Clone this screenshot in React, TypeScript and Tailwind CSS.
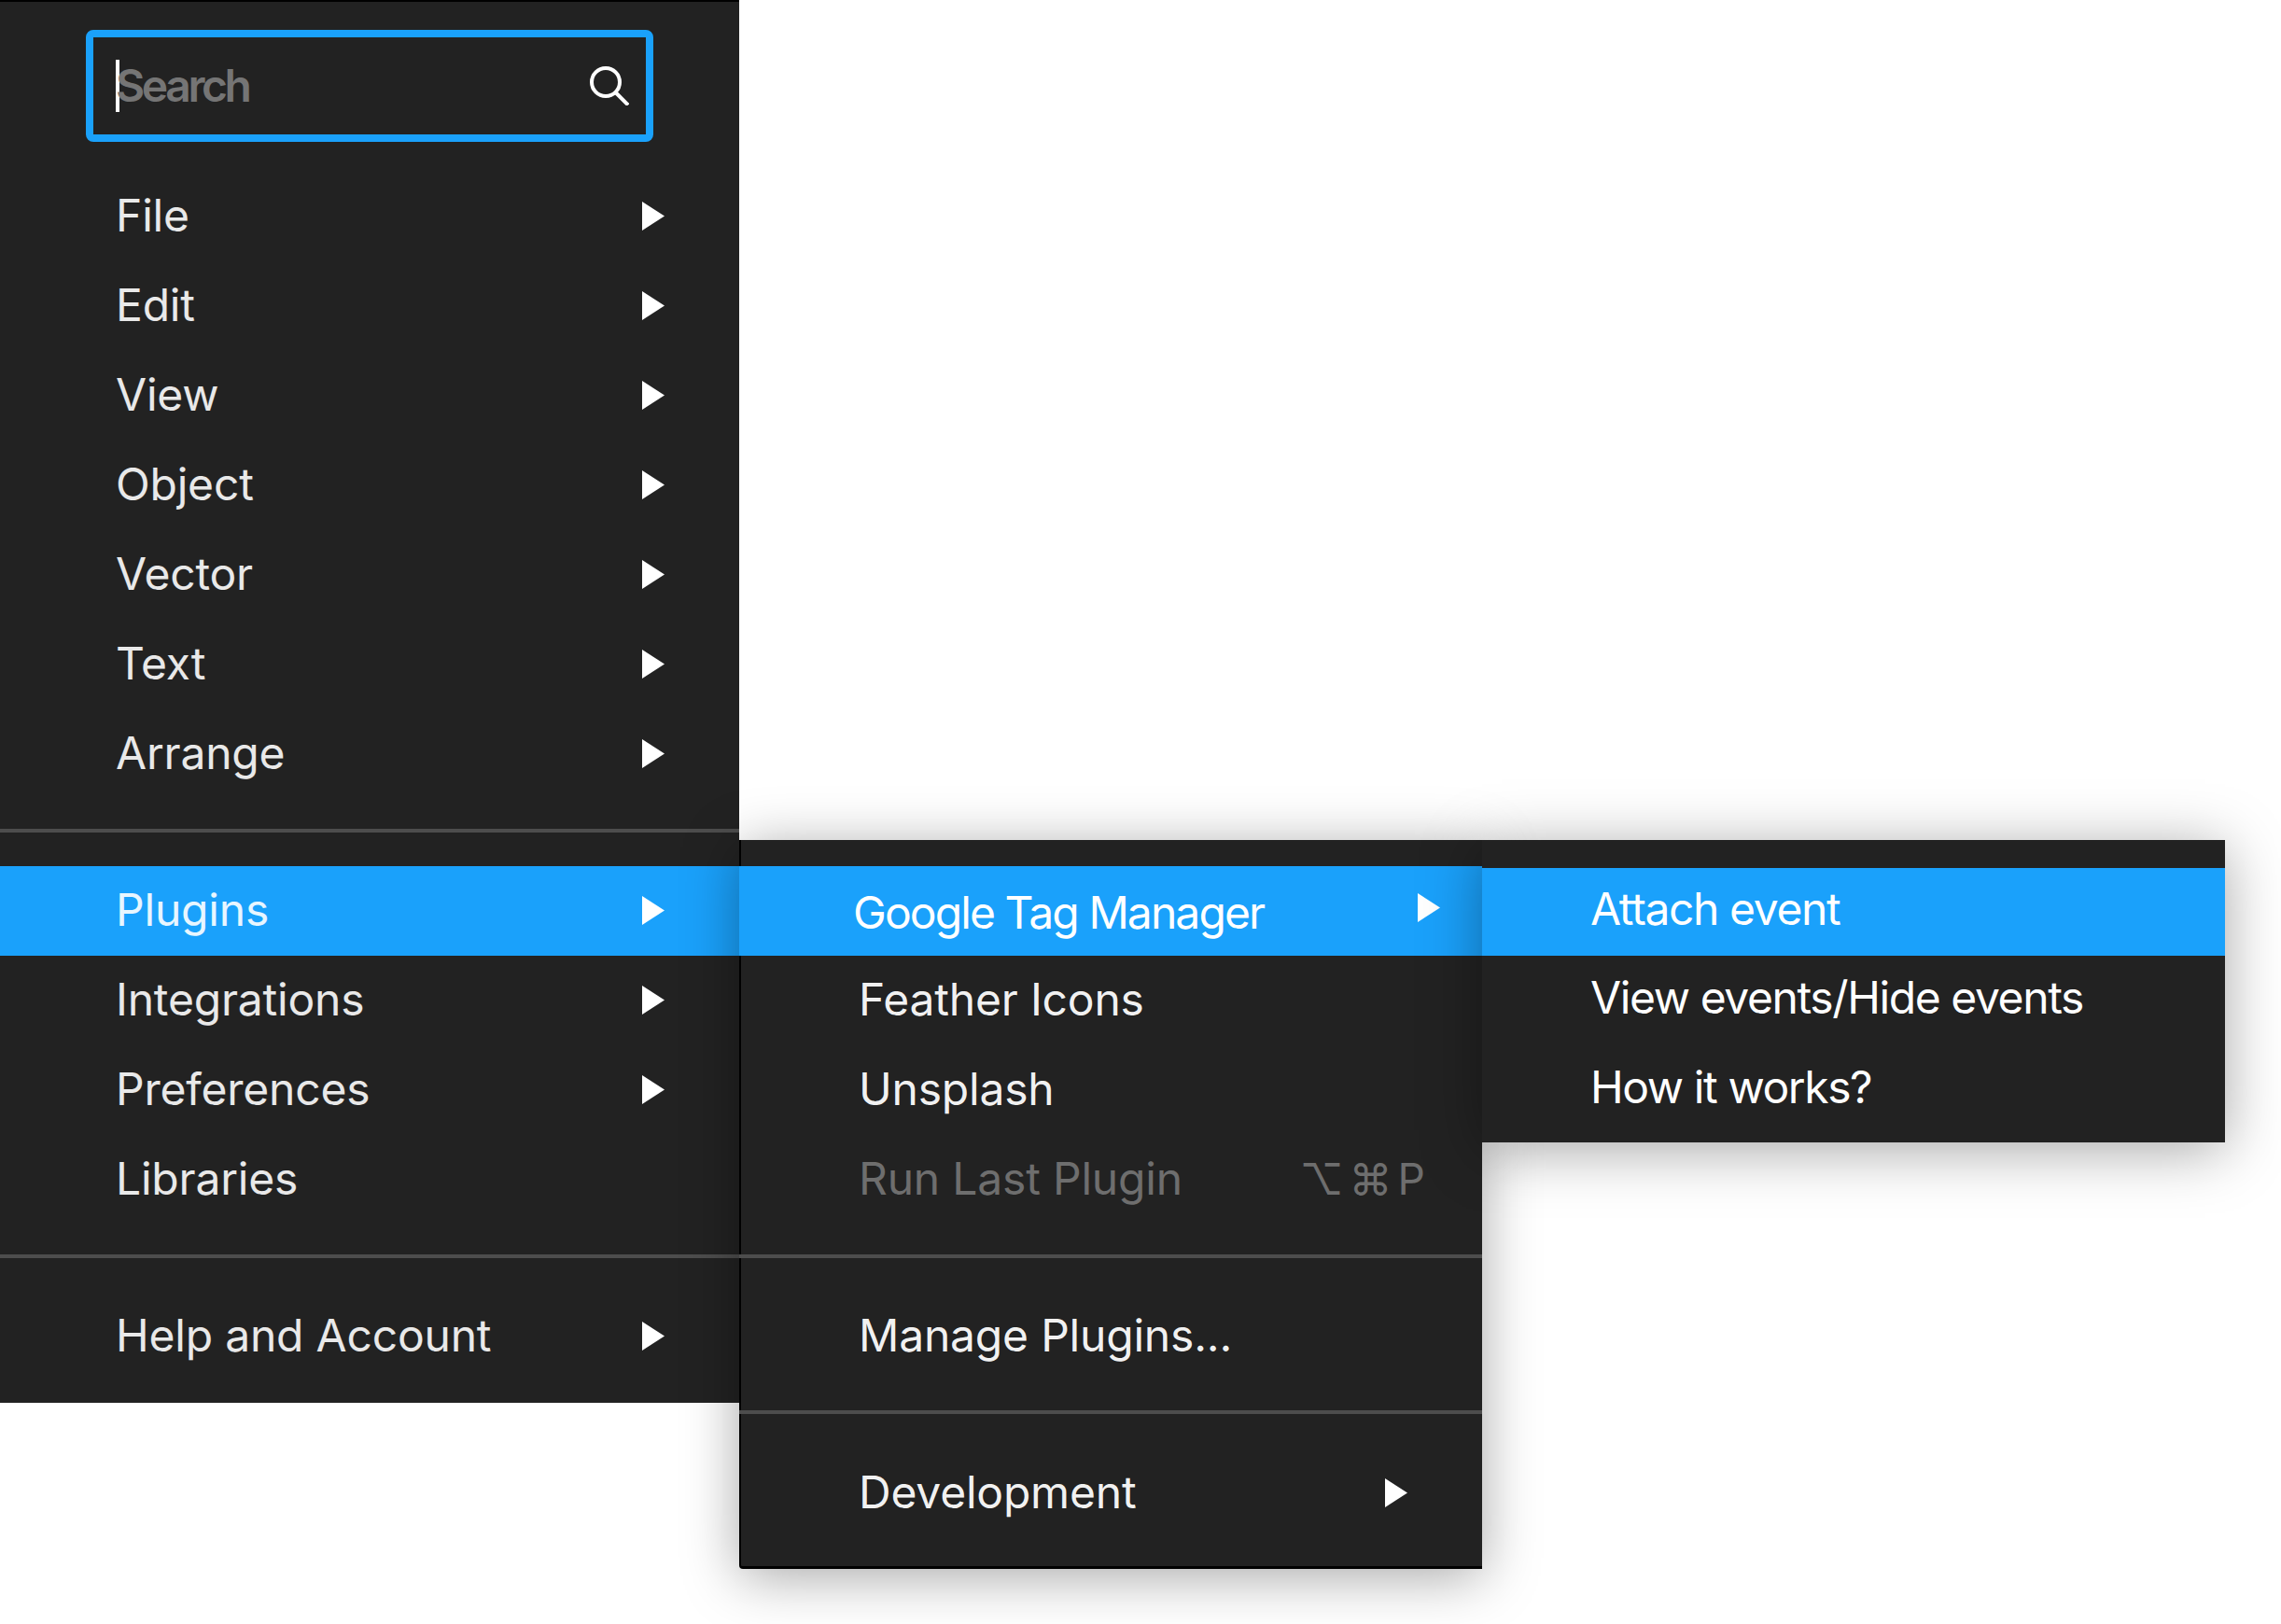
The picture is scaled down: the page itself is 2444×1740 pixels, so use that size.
import React from 'react';

const font = { fontFamily: 'Inter, sans-serif' };

function Arrow() {
  return (
    <svg width="24" height="31" viewBox="0 0 24 31" className="shrink-0">
      <path d="M0 0 L24 15.5 L0 31 Z" fill="#fff" />
    </svg>
  );
}

function Separator({ className = '' }: { className?: string }) {
  return <div className={`h-1 bg-[#4d4d4d] ${className}`} />;
}

function MainRow({ label, arrow = true, active = false }: { label: string; arrow?: boolean; active?: boolean }) {
  return (
    <div className={`flex h-24 items-center justify-between pl-[124px] pr-20 text-[48px] tracking-[-0.2px] text-white/90 ${active ? 'bg-[#1aa1fb]' : ''}`}>
      <span>{label}</span>
      {arrow && <Arrow />}
    </div>
  );
}

function PluginRow({ label, arrow = false, muted = false, shortcut }: { label: string; arrow?: boolean; muted?: boolean; shortcut?: string }) {
  return (
    <div className={`flex h-24 items-center justify-between pl-[126px] pr-20 text-[48px] tracking-[-0.2px] ${muted ? 'text-[#6e6e6e]' : 'text-white/95'}`}>
      <span>{label}</span>
      {arrow && <Arrow />}
      {shortcut && <span className="-mr-[25px] text-[46px] tracking-[6px]">{shortcut}</span>}
    </div>
  );
}

function EventRow({ label, active = false }: { label: string; active?: boolean }) {
  return (
    <div className={`flex items-center pb-1.5 pl-[116px] text-[48px] tracking-[-1.4px] text-white ${active ? 'h-[94px] bg-[#1aa1fb]' : 'h-24'}`}>
      {label}
    </div>
  );
}

export default function App() {
  return (
    <div className="flex min-h-[1740px] items-start overflow-hidden bg-white" style={font}>
      {/* main menu */}
      <div className="relative z-0 w-[792px] border-t-2 border-black bg-[#222222] pb-6">
        <div className="mx-[92px] mt-[30px] flex h-[120px] items-center justify-between rounded-lg border-8 border-[#1aa1fb] pl-6 pr-[18px]">
          <div className="flex items-center">
            <div className="h-14 w-1 bg-white" />
            <span className="-ml-1 text-[48px] font-semibold tracking-[-3.4px] text-[#757575]">Search</span>
          </div>
          <svg width="42" height="42" viewBox="0 0 42 42" fill="none" stroke="#fff" strokeWidth="4" className="shrink-0">
            <circle cx="17" cy="17" r="15" />
            <path d="M27.5 28 L41 41.5" />
          </svg>
        </div>
        <div className="mt-[31px]">
          {['File', 'Edit', 'View', 'Object', 'Vector', 'Text', 'Arrange'].map((item) => (
            <MainRow key={item} label={item} />
          ))}
        </div>
        <Separator className="mt-[33px]" />
        <div className="mt-9 [&>div]:pb-0.5">
          <MainRow label="Plugins" active />
          <MainRow label="Integrations" />
          <MainRow label="Preferences" />
          <MainRow label="Libraries" arrow={false} />
        </div>
        <Separator className="mt-8" />
        <div className="mt-[35px]">
          <MainRow label="Help and Account" />
        </div>
      </div>

      {/* plugins submenu */}
      <div className="relative z-10 mt-[900px] w-[796px] rounded-bl border-b-[3px] border-l-2 border-black bg-[#222222] pb-[31px] pt-7 shadow-[0_8px_60px_rgba(0,0,0,0.35)]">
        <div className="-ml-0.5 flex h-24 items-center justify-between bg-[#1aa1fb] pl-[122px] pr-[45px] text-[48px] tracking-[-1.9px] text-white">
          <span className="mt-1">Google Tag Manager</span>
          <span className="mb-2 flex">
            <Arrow />
          </span>
        </div>
        <div className="[&>div]:pb-0.5">
          <PluginRow label="Feather Icons" />
          <PluginRow label="Unsplash" />
          <PluginRow label="Run Last Plugin" muted shortcut="⌥⌘P" />
        </div>
        <Separator className="-ml-0.5 mt-8" />
        <div className="mt-[35px]">
          <PluginRow label="Manage Plugins..." />
        </div>
        <Separator className="-ml-0.5 mt-8" />
        <div className="mt-9">
          <PluginRow label="Development" arrow />
        </div>
      </div>

      {/* google tag manager submenu */}
      <div className="relative z-20 mt-[900px] w-[796px] bg-[#222222] pb-2 pt-[30px] shadow-[0_8px_60px_rgba(0,0,0,0.35)]">
        <EventRow label="Attach event" active />
        <EventRow label="View events/Hide events" />
        <EventRow label="How it works?" />
      </div>
    </div>
  );
}
